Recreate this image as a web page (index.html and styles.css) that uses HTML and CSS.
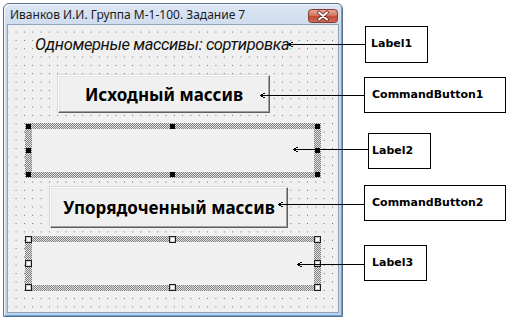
FILE: index.html
```html
<!DOCTYPE html>
<html lang="ru">
<head>
<meta charset="utf-8">
<title>Форма</title>
<link rel="stylesheet" href="styles.css">
</head>
<body>
<div class="scene">
  <div class="window">
    <div class="titlebar">
      <span class="title">Иванков И.И. Группа М-1-100. Задание 7</span>
      <span class="close">
        <svg width="30" height="14" viewBox="0 0 30 14">
          <defs>
            <linearGradient id="cg" x1="0" y1="0" x2="0" y2="1">
              <stop offset="0" stop-color="#e9a99b"/>
              <stop offset="0.45" stop-color="#d47863"/>
              <stop offset="0.55" stop-color="#c24a34"/>
              <stop offset="1" stop-color="#d0705a"/>
            </linearGradient>
          </defs>
          <rect x="0.5" y="0.5" width="29" height="13" rx="3" fill="url(#cg)" stroke="#83392c"/>
          <path d="M11 3.5 L19 10.5 M19 3.5 L11 10.5" stroke="#5a2118" stroke-width="3.6" stroke-linecap="round"/>
          <path d="M11 3.5 L19 10.5 M19 3.5 L11 10.5" stroke="#ffffff" stroke-width="2" stroke-linecap="round"/>
        </svg>
      </span>
    </div>
    <div class="client">
      <div class="caption">Одномерные массивы: сортировка</div>
      <div class="btn btn-source">Исходный массив</div>
      <div class="sel sel-active">
        <div class="sel-inner"></div>
        <span class="h h-tl"></span><span class="h h-tc"></span><span class="h h-tr"></span>
        <span class="h h-ml"></span><span class="h h-mr"></span>
        <span class="h h-bl"></span><span class="h h-bc"></span><span class="h h-br"></span>
      </div>
      <div class="btn btn-sorted">Упорядоченный массив</div>
      <div class="sel sel-passive">
        <div class="sel-inner"></div>
        <span class="h h-tl"></span><span class="h h-tc"></span><span class="h h-tr"></span>
        <span class="h h-ml"></span><span class="h h-mr"></span>
        <span class="h h-bl"></span><span class="h h-bc"></span><span class="h h-br"></span>
      </div>
    </div>
  </div>

  <div class="callouts">
    <div class="callout c-label1">Label1</div>
    <div class="callout wide c-cmd1">CommandButton1</div>
    <div class="callout c-label2">Label2</div>
    <div class="callout wide c-cmd2">CommandButton2</div>
    <div class="callout c-label3">Label3</div>
  </div>

  <svg class="arrows" width="508" height="324" viewBox="0 0 508 324">
    <g stroke="#000" stroke-width="1" fill="none">
      <line x1="289" y1="44.5" x2="365" y2="44.5"/>
      <polyline points="292.5,42 288.5,44.5 292.5,47"/>
      <line x1="261" y1="95.5" x2="364" y2="95.5"/>
      <polyline points="264.5,93 260.5,95.5 264.5,98"/>
      <line x1="294" y1="149.5" x2="368" y2="149.5"/>
      <polyline points="297.5,147 293.5,149.5 297.5,152"/>
      <line x1="279" y1="204.5" x2="364" y2="204.5"/>
      <polyline points="282.5,202 278.5,204.5 282.5,207"/>
      <line x1="298" y1="264.5" x2="364" y2="264.5"/>
      <polyline points="301.5,262 297.5,264.5 301.5,267"/>
    </g>
  </svg>
</div>
</body>
</html>
```

FILE: styles.css
```css
html, body {
  margin: 0;
  padding: 0;
  background: #ffffff;
}

.scene {
  position: relative;
  width: 508px;
  height: 324px;
  box-sizing: border-box;
  padding: 3px 0 0 3px;
  display: flex;
  align-items: flex-start;
}

/* ---------- window ---------- */
.window {
  width: 340px;
  height: 314px;
  box-sizing: border-box;
  border: 1px solid #5d6f88;
  border-radius: 6px 6px 0 0;
  padding: 0 3px 3px 3px;
  background: linear-gradient(#dde7f4, #cddcee 22px, #c6d7eb 60%, #bcd2ea);
  box-shadow: inset 1px 1px 0 #f2f7fd, inset -1px -1px 0 #5fa6d9;
  display: flex;
  flex-direction: column;
}

.titlebar {
  height: 20px;
  display: flex;
  align-items: center;
  justify-content: space-between;
  padding-left: 3px;
}

.title {
  font-family: "Noto Sans", "DejaVu Sans", sans-serif;
  font-size: 12px;
  color: #1b1b1b;
  line-height: 16px;
  padding-top: 1px;
}

.close {
  display: flex;
  margin-right: 1px;
  margin-top: 4px;
}

.client {
  flex: 1;
  box-sizing: border-box;
  border: 1px solid #8ea3bd;
  background-color: #f0f0f0;
  background-image: radial-gradient(circle at 0.5px 0.5px, #5a5a5a 0.6px, transparent 0.7px);
  background-size: 8.333px 8.333px;
  background-position: 7.6px 6.6px;
  display: flex;
  flex-direction: column;
  align-items: flex-start;
}

.caption {
  margin: 9px 0 0 27px;
  font-family: Roboto, "Noto Sans", sans-serif;
  font-style: italic;
  font-size: 16.5px;
  letter-spacing: -0.4px;
  line-height: 22px;
  color: #111111;
  background: #f0f0f0;
  white-space: nowrap;
}

/* ---------- buttons ---------- */
.btn {
  box-sizing: border-box;
  background: #f0f0f0;
  border-style: solid;
  border-width: 1px;
  border-color: #ffffff #5f5f5f #5f5f5f #ffffff;
  box-shadow: inset -1px -1px 0 #a0a0a0, inset 1px 1px 0 #e3e3e3, -1px -1px 0 #d8d8d8;
  display: flex;
  align-items: center;
  justify-content: center;
  font-family: "Noto Sans", "DejaVu Sans", sans-serif;
  font-weight: bold;
  font-size: 17px;
  color: #000000;
  white-space: nowrap;
}

.btn-source {
  width: 212px;
  height: 38px;
  margin: 19px 0 0 50px;
}

.btn-sorted {
  width: 238px;
  height: 41px;
  margin: 9px 0 0 42px;
}

/* ---------- design-time selection frames ---------- */
.sel {
  position: relative;
  width: 296px;
  height: 55px;
  box-sizing: border-box;
  padding: 6px 7px;
  background: repeating-conic-gradient(#808080 0% 25%, #e2e2e2 0% 50%) 0 0 / 2px 2px;
}

.sel-active { margin: 10px 0 0 17px; }
.sel-passive { margin: 8px 0 0 17px; }

.sel-inner {
  height: 100%;
  background: #f0f0f0;
}

.h {
  position: absolute;
  box-sizing: border-box;
}

.sel-active .h {
  width: 5px;
  height: 5px;
  background: #000000;
}
.sel-active .h-tl { left: 1px; top: 1px; }
.sel-active .h-tc { left: 145px; top: 1px; }
.sel-active .h-tr { left: 290px; top: 1px; }
.sel-active .h-ml { left: 1px; top: 25px; }
.sel-active .h-mr { left: 290px; top: 25px; }
.sel-active .h-bl { left: 1px; top: 49px; }
.sel-active .h-bc { left: 145px; top: 49px; }
.sel-active .h-br { left: 290px; top: 49px; }

.sel-passive .h {
  width: 7px;
  height: 7px;
  border: 1px solid #1e1e1e;
  background: #ffffff;
  box-shadow: inset 0 0 0 1px #c8c8c8;
}
.sel-passive .h-tl { left: 0; top: 0; }
.sel-passive .h-tc { left: 144px; top: 0; }
.sel-passive .h-tr { left: 289px; top: 0; }
.sel-passive .h-ml { left: 0; top: 24px; }
.sel-passive .h-mr { left: 289px; top: 24px; }
.sel-passive .h-bl { left: 0; top: 48px; }
.sel-passive .h-bc { left: 144px; top: 48px; }
.sel-passive .h-br { left: 289px; top: 48px; }

/* ---------- callouts ---------- */
.callouts {
  margin-left: 21px;
  display: flex;
  flex-direction: column;
  align-items: flex-start;
}

.callout {
  box-sizing: border-box;
  width: 63px;
  height: 36px;
  border: 1px solid #000000;
  background: #ffffff;
  padding-top: 10px;
  font-family: "DejaVu Sans", sans-serif;
  font-weight: bold;
  font-size: 11px;
  line-height: 13px;
  color: #000000;
  white-space: nowrap;
}

.callout.wide { width: 142px; }

.c-label1 { height: 37px; margin: 23px 0 0 1px; padding-left: 5px; }
.c-cmd1   { margin-top: 14px; padding-left: 7px; }
.c-label2 { margin: 20px 0 0 4px; padding-left: 3px; }
.c-cmd2   { margin-top: 16px; padding-left: 7px; }
.c-label3 { margin-top: 24px; padding-left: 7px; }

/* ---------- annotation arrows (overlay) ---------- */
.arrows {
  position: absolute;
  left: 0;
  top: 0;
  pointer-events: none;
  shape-rendering: crispEdges;
}
```
